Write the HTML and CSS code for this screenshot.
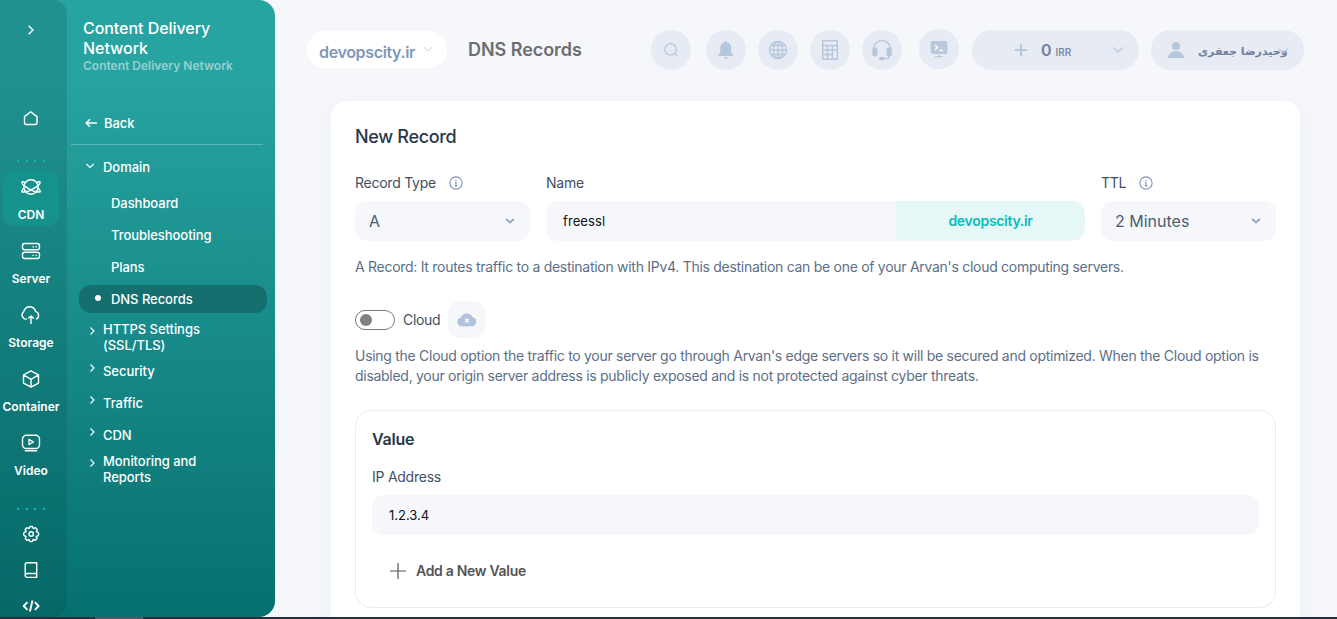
FILE: index.html
```html
<!DOCTYPE html>
<html lang="en">
<head>
<meta charset="utf-8">
<title>DNS Records</title>
<link rel="stylesheet" href="styles.css">
</head>
<body>
<div class="app">
  <aside class="sidebar">
    <nav class="rail">
      <svg class="rail-toggle" width="20" height="20" viewBox="0 0 20 20"><path d="M7.600 5.800 12 10l-4.400 4.200"/></svg>
      <svg class="rail-home" width="20" height="20" viewBox="0 0 20 20"><path d="M3.500 8.600 9.700 3.700l6.300 4.900v6.500a1.400 1.400 0 0 1-1.400 1.400H4.900a1.400 1.400 0 0 1-1.400-1.400z"/></svg>
      <div class="dots"><i></i><i></i><i></i><i></i></div>
      <div class="products">
        <a class="product active"><svg width="20" height="20" viewBox="0 0 20 20"><circle cx="10" cy="10" r="7.200"/><path d="M4.200 5.400C2.400 4.600 1 4.400.9 5.100c-.7 2.400 11.200 11.200 18.200 9.800.3-.7-.4-2.200-1.900-3.700M15.800 5.400c1.800-.8 3.200-1 3.300-.3.700 2.400-11.200 11.200-18.200 9.800-.3-.7.400-2.200 1.900-3.700"/></svg><span>CDN</span></a>
        <a class="product"><svg width="20" height="20" viewBox="0 0 20 20"><rect x="1.500" y="2.500" width="17" height="6.300" rx="2.200"/><rect x="1.500" y="11.200" width="17" height="6.300" rx="2.200"/><path d="M11.500 5.700h1.300M14.500 5.700h1.300M11.500 14.400h1.300M14.500 14.400h1.300"/></svg><span>Server</span></a>
        <a class="product"><svg width="20" height="20" viewBox="0 0 20 20"><path d="M5.600 14.200A4.200 4.200 0 0 1 2.600 6.800C3.500 3.700 6 1.700 8.500 1.700c3 0 5.200 1.800 6 4.600A4.200 4.200 0 0 1 15 14.200M10 19v-8M7.200 13.600 10 10.900l2.800 2.700"/></svg><span>Storage</span></a>
        <a class="product"><svg width="20" height="20" viewBox="0 0 20 20"><path d="m10 1.800 7.500 4.100v8.200L10 18.200l-7.500-4.100V5.900zM2.500 5.900 10 10.300l7.500-4.400M10 10.300v7.900"/></svg><span>Container</span></a>
        <a class="product"><svg width="20" height="20" viewBox="0 0 20 20"><rect x="1.500" y="2.300" width="17" height="13.200" rx="3.800"/><path d="M8 6.300v5.200L12.500 9zM3.800 17.800h12.400"/></svg><span>Video</span></a>
      </div>
      <div class="dots dots-low"><i></i><i></i><i></i><i></i></div>
      <div class="tools">
        <svg width="20" height="20" viewBox="0 0 20 20"><circle cx="10.200" cy="10" r="2.200"/><path d="m8.900 2.700 1.300-.4 1.300.4.700 1.900 2.200-.9 1.800 1.700-.9 2.100 1.800.8.700 1.700-.7 1.700-1.900.8.900 2.100-1.800 1.700-2.200-.9-.7 1.900-1.300.4-1.300-.4-.7-1.900-2.200.9-1.700-1.700.9-2.100-1.900-.8-.6-1.700.6-1.700 1.900-.8-.9-2.100 1.700-1.700 2.200.9z"/></svg>
        <svg width="20" height="20" viewBox="0 0 20 20"><path d="M15.700 13.500V2.800H6.200a2 2 0 0 0-2 2v10.600a2 2 0 0 0 2 2h9.500v-3.900H6.200a2 2 0 0 0-2 1.900"/></svg>
        <svg class="bold" width="20" height="20" viewBox="0 0 20 20"><path d="M6.500 6.200 2.700 10l3.800 3.800M13.900 6.200l3.700 3.800-3.700 3.800M11.500 4.500 8.900 15.500"/></svg>
      </div>
    </nav>
    <div class="menu">
      <h1>Content Delivery<br>Network</h1>
      <p class="menu-sub">Content Delivery Network</p>
      <a class="back"><svg width="12" height="10" viewBox="0 0 12 10"><path d="M12 5H1.500M5 1.300 1.200 5 5 8.700"/></svg>Back</a>
      <div class="group open"><svg width="8" height="8" viewBox="0 0 8 8"><path d="M.3 2 4 5.500 7.700 2"/></svg>Domain</div>
      <div class="pages">
        <a>Dashboard</a>
        <a>Troubleshooting</a>
        <a>Plans</a>
        <a class="current">DNS Records</a>
      </div>
      <div class="group two"><svg width="8" height="8" viewBox="0 0 8 8"><path d="M2.500.5 6 4 2.500 7.500"/></svg>HTTPS Settings<br>(SSL/TLS)</div>
      <div class="group"><svg width="8" height="8" viewBox="0 0 8 8"><path d="M2.500.5 6 4 2.500 7.500"/></svg>Security</div>
      <div class="group"><svg width="8" height="8" viewBox="0 0 8 8"><path d="M2.500.5 6 4 2.500 7.500"/></svg>Traffic</div>
      <div class="group"><svg width="8" height="8" viewBox="0 0 8 8"><path d="M2.500.5 6 4 2.500 7.500"/></svg>CDN</div>
      <div class="group two last"><svg width="8" height="8" viewBox="0 0 8 8"><path d="M2.500.5 6 4 2.500 7.500"/></svg>Monitoring and<br>Reports</div>
    </div>
  </aside>
  <main class="main">
    <header class="topbar">
      <div class="domain"><span>devopscity.ir</span><svg width="10" height="6" viewBox="0 0 10 6"><path d="M.5.500 5 5 9.500.500"/></svg></div>
      <h2>DNS Records</h2>
      <div class="round search"><svg width="20" height="20" viewBox="0 0 20 20"><circle cx="9.600" cy="9.300" r="5.700"/><path d="m13.700 13.400 3 3"/></svg></div>
      <div class="round bell"><svg width="20" height="20" viewBox="0 0 20 20"><path class="fill" d="M2.300 16v-1.200c1.500-.6 2-1.500 2-3V7.500c0-2.800 1.700-4.700 4.200-5.200a1.300 1.300 0 0 1 2.600 0c2.500.5 4.100 2.400 4.100 5.200v4.300c0 1.500.6 2.400 2.100 3V16zM8 17h3.800a1.900 1.900 0 0 1-3.800 0"/></svg></div>
      <div class="round globe"><svg width="20" height="20" viewBox="0 0 20 20"><circle cx="10" cy="10" r="8.500"/><ellipse cx="10" cy="10" rx="4.500" ry="8.500"/><path d="M10 1.500v17M1.500 10h17M3.500 5.500h13M3.500 14.500h13"/></svg></div>
      <div class="round calc"><svg width="20" height="20" viewBox="0 0 20 20"><path d="M2.700.700h14.600v18.600H2.700zM2.700 5.500h14.600M2.700 10h14.600M2.700 14.500h9.800M7.500 5.500v13.800M12.500 5.500v13.800"/></svg></div>
      <div class="round support"><svg width="20" height="20" viewBox="0 0 20 20"><path d="M1.500 9V8.500a8.500 7.800 0 0 1 17 0V9M16.500 16v2.500H12"/><rect class="fill" x=".2" y="7.500" width="5.300" height="8.700" rx="2"/><rect class="fill" x="14.500" y="7.500" width="5.300" height="8.700" rx="2"/><rect class="fill" x="7" y="17" width="6" height="3" rx="1.500"/></svg></div>
      <div class="round console"><svg width="20" height="20" viewBox="0 0 20 20"><rect class="fill" x="1.600" y="2" width="16.800" height="13" rx="2"/><path class="light" d="m6 6 2.500 2.500L6 11M10 11.500h4"/><path d="M10 15v2.700M6 17.700h8"/></svg></div>
      <div class="balance"><svg width="12" height="12" viewBox="0 0 12 12"><path d="M6 0v12M0 6h12"/></svg><b>0</b><small>IRR</small><svg class="down" width="10" height="6" viewBox="0 0 10 6"><path d="M.3.500 5 5 9.700.500"/></svg></div>
      <div class="user"><svg width="16" height="16" viewBox="0 0 16 16"><circle class="fill" cx="8" cy="4" r="4"/><path class="fill" d="M0 16c.2-4.500 3.500-6.800 8-6.800s7.800 2.300 8 6.800z"/></svg><span dir="rtl" lang="fa">وحیدرضا جعفری</span><svg class="down" width="10" height="6" viewBox="0 0 10 6"><path d="M.3.500 5 5 9.700.500"/></svg></div>
    </header>
    <section class="card">
      <h3>New Record</h3>
      <div class="fields">
        <div class="field type">
          <label>Record Type<svg width="14" height="14" viewBox="0 0 14 14"><circle cx="7" cy="7" r="6.100"/><path d="M7 3.800v1.100M6 6.200h1v3.600M5.700 9.900h2.700"/></svg></label>
          <div class="select"><span>A</span><svg width="10" height="6" viewBox="0 0 10 6"><path d="m1.200 1 3.800 3.600L8.800 1"/></svg></div>
        </div>
        <div class="field name">
          <label>Name</label>
          <div class="joined"><span class="typed">freessl</span><span class="suffix">devopscity.ir</span></div>
        </div>
        <div class="field ttl">
          <label>TTL<svg width="14" height="14" viewBox="0 0 14 14"><circle cx="7" cy="7" r="6.100"/><path d="M7 3.800v1.100M6 6.200h1v3.600M5.700 9.900h2.700"/></svg></label>
          <div class="select"><span>2 Minutes</span><svg width="10" height="6" viewBox="0 0 10 6"><path d="m1.200 1 3.800 3.600L8.800 1"/></svg></div>
        </div>
      </div>
      <p class="help record-help">A Record: It routes traffic to a destination with IPv4. This destination can be one of your Arvan's cloud computing servers.</p>
      <div class="cloud">
        <span class="switch"><i></i></span><span class="cloud-label">Cloud</span>
        <span class="cloud-badge"><svg width="20" height="14" viewBox="0 0 20 14"><path class="fill" d="M4.500 13.200a4.300 4.300 0 0 1-.7-8.500A6.200 6.200 0 0 1 15.300 4a4.700 4.700 0 0 1 .2 9.200z"/><path class="light" d="m8.200 5.800 3.600 3.600M11.800 5.800 8.200 9.400"/></svg></span>
      </div>
      <p class="help cloud-help">Using the Cloud option the traffic to your server go through Arvan's edge servers so it will be secured and optimized. When the Cloud option is<br>disabled, your origin server address is publicly exposed and is not protected against cyber threats.</p>
      <div class="value">
        <h4>Value</h4>
        <label>IP Address</label>
        <div class="ip">1.2.3.4</div>
        <a class="add"><svg width="16" height="16" viewBox="0 0 16 16"><path d="M8 0v16M0 8h16"/></svg>Add a New Value</a>
      </div>
    </section>
  </main>
</div>
<div class="taskbar"><i></i></div>
</body>
</html>
```
FILE: styles.css
```css
* { box-sizing: border-box; }
body {
  margin: 0;
  height: 619px;
  overflow: hidden;
  background: #f5f7fb;
  font-family: Inter, "Liberation Sans", sans-serif;
  font-size: 14px;
  color: #34455a;
}
h1, h2, h3, h4, p { margin: 0; }
svg { display: block; flex: none; fill: none; stroke: currentColor; stroke-width: 1.2; }
.app { display: flex; height: 617px; overflow: hidden; }
.taskbar { height: 2px; padding-left: 95px; background: #25303c; }
.taskbar i { display: block; width: 48px; height: 2px; background: #505b66; }

/* Sidebar */
.sidebar {
  display: flex;
  flex: none;
  width: 275px;
  height: 617px;
  color: #fff;
  background: linear-gradient(#27a3a1 0, #27a3a1 75px, #06706f 100%);
  border-radius: 0 16px 16px 0;
  overflow: hidden;
}
.rail {
  display: flex;
  flex-direction: column;
  align-items: center;
  width: 67px;
  height: 617px;
  padding: 20px 5px 0 0;
  background: rgba(4, 75, 76, .2);
  border-radius: 0 14px 14px 0;
}
.rail svg { stroke-width: 1.4; stroke-linejoin: round; }
.rail-home { margin-top: 68px; }
.dots { display: flex; gap: 6.600px; height: 2px; margin-top: 32px; }
.dots i { width: 2px; height: 2px; background: #0cb6b2; }
.products { display: flex; flex-direction: column; gap: 8px; margin-top: 8px; }
.product {
  display: flex;
  flex-direction: column;
  align-items: center;
  gap: 10px;
  width: 56px;
  height: 56px;
  padding-top: 7px;
  border-radius: 12px;
  font-size: 12px;
  font-weight: 600;
  line-height: 16px;
  white-space: nowrap;
}
.product.active { background: #16928d; }
.dots-low { margin-top: 26px; }
.tools { display: flex; flex-direction: column; gap: 16px; margin-top: 14px; }
.rail .bold { stroke-width: 1.900; }
.menu { flex: 1; padding: 18px 8px 0 4px; font-size: 13px; font-weight: 500; letter-spacing: -.05px; }
.menu h1 { padding-left: 12px; font-size: 16px; font-weight: 500; line-height: 20px; letter-spacing: -.05px; }
.menu-sub { padding-left: 12px; font-size: 12px; font-weight: 600; line-height: 16px; letter-spacing: 0; color: rgba(255, 255, 255, .5); }
.back {
  display: flex;
  align-items: center;
  gap: 7px;
  width: 192px;
  height: 43px;
  margin-top: 28px;
  padding-left: 14px;
  border-bottom: 1px solid rgba(255, 255, 255, .25);
}
.back svg { stroke-width: 1.5; }
.group { position: relative; padding-left: 32px; line-height: 16px; margin-bottom: 16px; }
.group svg { position: absolute; left: 17px; top: 1px; stroke-width: 1.1; }
.group.open { margin: 14px 0 14px; }
.group.open svg { left: 15px; top: 3px; }
.group.two { margin-bottom: 10px; }
.group.two svg { top: 6px; }
.group:nth-last-child(2) { margin-bottom: 10px; }
.pages { display: flex; flex-direction: column; gap: 4px; margin: 0 0 8px 8px; }
.pages a { display: flex; align-items: center; height: 28px; padding-left: 32px; border-radius: 12px; }
.pages .current { background: #156f6e; padding-left: 16px; gap: 10px; }
.current::before { content: ""; width: 6px; height: 6px; margin-top: -2px; border-radius: 50%; background: #fff; }

/* Top bar */
.main { flex: 1; min-width: 0; padding: 29px 33px 0 32px; }
.topbar { display: flex; align-items: flex-start; height: 72px; }
.domain {
  display: flex;
  align-items: center;
  gap: 8px;
  flex: none;
  width: 140px;
  height: 37px;
  margin-top: 2px;
  padding: 4px 0 0 12px;
  border-radius: 19px;
  background: #fff;
  color: #7f98b8;
  font-size: 16px;
  font-weight: 600;
}
.domain span { width: 96px; letter-spacing: -.35px; }
.domain svg { margin-top: -6px; color: #d9e1ed; }
.topbar h2 { flex: none; width: 183px; margin: 10px 0 0 21px; font-size: 18px; line-height: 22px; font-weight: 600; letter-spacing: -.05px; color: #6d6e70; }
.round {
  display: grid;
  place-items: center;
  flex: none;
  width: 40px;
  height: 40px;
  margin: 1px 12px 0 0;
  border-radius: 50%;
  background: #e6ebf4;
  color: #b6c7dc;
}
.search { margin-right: 15px; }
.globe svg, .calc svg { stroke-width: 1.400; }
.support { margin-right: 17px; }
.console { margin: 0 13px 0 0; color: #bbc8dc; }
.fill { fill: currentColor; stroke: none; }
.light { stroke: #f7f9fc; stroke-width: 1.500; }
.balance, .user {
  position: relative;
  display: flex;
  align-items: center;
  flex: none;
  height: 40px;
  margin-top: 1px;
  border-radius: 20px;
  background: #e6ebf4;
  color: #b6c7dc;
}
.balance { width: 167px; padding-left: 43px; }
.balance svg { stroke-width: 2; }
.balance .down, .user .down { stroke-width: 1.200; }
.balance b { margin-left: 14px; font-size: 16px; font-weight: 600; color: #6f819c; }
.balance small { margin: 4px 0 0 4px; font-size: 10px; font-weight: 500; color: #6f819c; }
.balance .down { margin-left: auto; margin-right: 16px; }
.user { width: 153px; margin-left: 12px; padding-left: 17px; }
.user span { margin: 3px 0 0 14px; font: 700 11px "DejaVu Sans", sans-serif; color: #6f819c; white-space: nowrap; }
.user .down { position: absolute; right: 16px; top: 18px; }

/* Record form */
.card {
  width: 969px;
  height: 560px;
  margin-left: 24px;
  padding: 24px;
  border-radius: 16px;
  background: #fff;
  box-shadow: 0 4px 24px rgba(50, 70, 110, .04);
}
.card h3 { font-size: 18px; font-weight: 500; line-height: 24px; letter-spacing: -.32px; color: #293748; }
.fields { display: flex; gap: 16px; margin-top: 23px; }
.type, .ttl { width: 175px; }
.name { width: 539px; }
label { display: flex; align-items: center; height: 20px; margin-bottom: 9px; letter-spacing: -.25px; color: #3f5064; }
label svg { margin: 2px 0 0 13px; color: #7c95b6; stroke-width: 1.100; }
.select, .joined, .ip { display: flex; align-items: center; height: 40px; border-radius: 12px; background: #f5f7fb; }
.select { justify-content: space-between; padding: 0 15px 1px 14px; font-size: 16px; color: #4d5d71; }
.select svg { margin-top: 1px; color: #8ba3c5; stroke-width: 1.800; }
.joined { overflow: hidden; padding-left: 17px; }
.typed, .ip { color: #111; font-size: 13px; }
.typed { letter-spacing: .1px; }
.suffix {
  width: 189px;
  height: 39px;
  margin: 0 0 1px auto;
  border-radius: 0 12px 12px 0;
  background: #e5f7f7;
  color: #0cbcbb;
  font-size: 14px;
  font-weight: 600;
  line-height: 39px;
  letter-spacing: -.3px;
  text-align: center;
}
.help { line-height: 20px; font-weight: 400; letter-spacing: -.285px; color: #5d6f86; white-space: nowrap; }
.record-help { margin-top: 16px; }
.cloud { display: flex; align-items: center; gap: 8px; height: 37px; margin-top: 24px; }
.switch { width: 40px; height: 20px; padding: 3px 4px; border: 1px solid #777; border-radius: 10px; }
.switch i { display: block; width: 12px; height: 12px; border-radius: 50%; background: #808080; }
.cloud-badge { display: grid; place-items: center; width: 37px; height: 37px; border-radius: 12px; background: #f5f7fb; color: #b0c3da; }
.cloud-label { letter-spacing: -.35px; color: #3f5064; }
.cloud-help { margin-top: 8px; }
.value { width: 921px; height: 198px; margin-top: 24px; padding: 18px 16px; border: 1px solid #e8ebf5; border-radius: 16px; }
.value h4 { font-size: 16px; font-weight: 600; line-height: 20px; letter-spacing: -.2px; color: #293748; }
.value label { margin: 17px 0 9px; }
.ip { padding-left: 17px; }
.add { display: flex; align-items: center; gap: 10px; margin-top: 26px; padding-left: 18px; line-height: 20px; font-weight: 600; letter-spacing: -.3px; color: #555; }
```
